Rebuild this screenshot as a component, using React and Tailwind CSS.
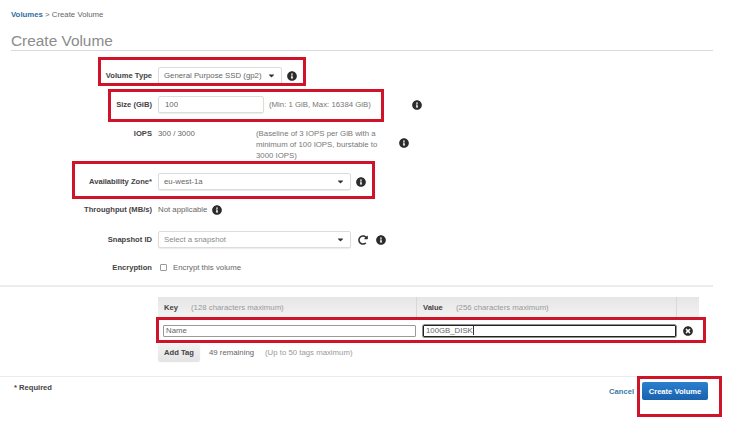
import React from 'react';
import { FaInfoCircle, FaTimesCircle, FaCaretDown, FaRedoAlt } from 'react-icons/fa';

const Info = ({ className = '' }) => (
  <FaInfoCircle className={`text-[#2b2b2b] text-[10px] shrink-0 ${className}`} />
);

const Label = ({ children }) => (
  <div className="w-[152px] mr-[6px] shrink-0 text-right font-bold text-[7.6px] text-[#444]">{children}</div>
);

const Select = ({ width, value, muted }) => (
  <div className={`${width} h-[17px] flex items-center justify-between pl-[5px] pr-[5px] bg-white border border-[#dcdcdc] rounded-[2px] shadow-[0_1px_1px_rgba(0,0,0,0.08)]`}>
    <span className={`whitespace-nowrap ${muted ? 'text-[#8a8a8a]' : 'text-[#666]'}`}>{value}</span>
    <FaCaretDown className="text-[#333] text-[9px]" />
  </div>
);

const RedBox = ({ className }) => (
  <div className={`absolute border-[3px] border-[#cf1329] pointer-events-none ${className}`} />
);

export default function App() {
  return (
    <div className="relative w-[756px] h-[433px] overflow-hidden bg-white text-[7.8px] leading-[11px] text-[#666] font-['Liberation_Sans',Arial,sans-serif]">
      <div className="pl-[11px] pt-[9px] w-[713px]">
        <div className="h-[11px]">
          <span className="text-[#2f6f9f] font-bold">Volumes</span>
          <span className="text-[#666]"> &gt; Create Volume</span>
        </div>
        <h1 className="mt-[11px] text-[15.4px] leading-[19px] text-[#8c8c8c]">Create Volume</h1>
        <div className="h-px bg-[#d9d9d9]" />
      </div>

      <div className="mt-[16px]">
        <div className="flex items-center h-[17px]">
          <Label>Volume Type</Label>
          <Select width="w-[124px]" value="General Purpose SSD (gp2)" />
          <Info className="ml-[5px]" />
        </div>

        <div className="flex items-center h-[17px] mt-[12px]">
          <Label>Size (GiB)</Label>
          <div className="w-[106px] h-[17px] flex items-center pl-[6px] border border-[#dcdcdc] rounded-[2px] shadow-[0_1px_1px_rgba(0,0,0,0.08)]">100</div>
          <span className="ml-[5px] text-[#777]">(Min: 1 GiB, Max: 16384 GiB)</span>
          <Info className="ml-[41px]" />
        </div>

        <div className="flex mt-[15px] h-[33px]">
          <Label>IOPS</Label>
          <div className="w-[98px]">300 / 3000</div>
          <div className="w-[135px] text-[#777]">
            (Baseline of 3 IOPS per GiB with a minimum of 100 IOPS, burstable to 3000 IOPS)
          </div>
          <Info className="ml-[8px] mt-[10px]" />
        </div>

        <div className="flex items-center h-[17px] mt-[12px]">
          <Label>Availability Zone*</Label>
          <Select width="w-[193px]" value="eu-west-1a" />
          <Info className="ml-[5px]" />
        </div>

        <div className="flex items-center h-[17px] mt-[11px]">
          <Label>Throughput (MB/s)</Label>
          <span>Not applicable</span>
          <Info className="ml-[5px]" />
        </div>

        <div className="flex items-center h-[17px] mt-[13px]">
          <Label>Snapshot ID</Label>
          <Select width="w-[193px]" value="Select a snapshot" muted />
          <FaRedoAlt className="ml-[7px] text-[#333] text-[10px]" />
          <Info className="ml-[8px]" />
        </div>

        <div className="flex items-center h-[17px] mt-[11px]">
          <Label>Encryption</Label>
          <div className="w-[7px] h-[7px] ml-[2px] border border-[#999] rounded-[1px]" />
          <span className="ml-[6px]">Encrypt this volume</span>
        </div>
      </div>

      <div className="mt-[9px] w-[713px] h-[2px] bg-[#ececec]" />

      <div className="ml-[158px] mt-[10px] w-[541px]">
        <div className="flex items-center h-[20px] bg-gradient-to-b from-[#e6e6e6] to-[#f2f2f2]">
          <div className="w-[259px] h-full flex items-center pl-[6px] border-r border-[#d8d8d8]">
            <span className="font-bold text-[7.6px] text-[#444] w-[27px]">Key</span>
            <span className="text-[#999]">(128 characters maximum)</span>
          </div>
          <div className="w-[260px] h-full flex items-center pl-[6px] border-r border-[#d8d8d8]">
            <span className="font-bold text-[7.6px] text-[#444] w-[33px]">Value</span>
            <span className="text-[#999]">(256 characters maximum)</span>
          </div>
        </div>

        <div className="flex items-center h-[27px]">
          <div className="ml-[5px] w-[253px] h-[12px] flex items-center pl-[2px] border border-[#999] rounded-[1px]">Name</div>
          <div className="ml-[7px] w-[253px] h-[12px] flex items-center pl-[2px] border border-[#222] rounded-[1px] shadow-[0_0_0_0.5px_#222]">
            100GB_DISK<span className="w-px h-[9px] bg-[#333]" />
          </div>
          <FaTimesCircle className="ml-[7px] text-[#2b2b2b] text-[10px]" />
        </div>

        <div className="flex items-center">
          <div className="w-[42px] h-[17px] flex items-center justify-center font-bold text-[7.6px] text-[#444] bg-gradient-to-b from-[#f2f2f2] to-[#e4e4e4] rounded-[2px] shadow-[0_1px_1px_rgba(0,0,0,0.12)]">Add Tag</div>
          <span className="ml-[9px] w-[56px]">49 remaining</span>
          <span className="text-[#999]">(Up to 50 tags maximum)</span>
        </div>
      </div>

      <div className="mt-[15px] w-[713px] h-px bg-[#ececec]" />

      <div className="flex justify-between w-[708px] pl-[14px] pt-[5px]">
        <div className="font-bold text-[7.6px] text-[#444]">* Required</div>
        <div className="flex items-center">
          <span className="font-bold text-[7.6px] text-[#3a78a8] mr-[8px]">Cancel</span>
          <div className="w-[66px] h-[18px] flex items-center justify-center font-bold text-[7.6px] text-white bg-gradient-to-b from-[#2a7fd0] to-[#1a62ad] rounded-[2px]">Create Volume</div>
        </div>
      </div>

      <RedBox className="left-[98px] top-[57px] w-[208px] h-[29px]" />
      <RedBox className="left-[108px] top-[89px] w-[276px] h-[33px]" />
      <RedBox className="left-[72px] top-[161px] w-[303px] h-[38px]" />
      <RedBox className="left-[156px] top-[317px] w-[550px] h-[26px]" />
      <RedBox className="left-[637px] top-[376px] w-[85px] h-[41px]" />
    </div>
  );
}
